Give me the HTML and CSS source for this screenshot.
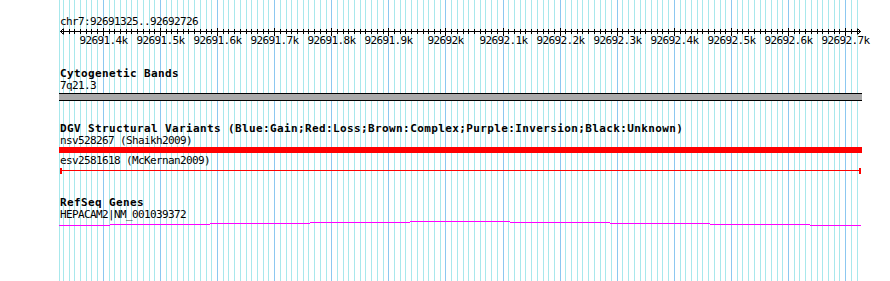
FILE: index.html
```html
<!DOCTYPE html>
<html lang="en">

<head>
    <meta charset="UTF-8" />
    <title>chr7:92691325..92692726</title>
    <link rel="stylesheet" href="styles.css">
</head>

<body>

    <div class="panel" id="panel" data-start="92691325" data-end="92692726">
        <!-- grid behind all tracks -->
        <svg class="grid" id="grid" width="890" height="281"></svg>

        <div class="segment">chr7:92691325..92692726</div>
        <svg class="ruler" id="ruler" width="890" height="20"></svg>

        <div class="track cyto">
            <div class="track-name">Cytogenetic Bands</div>
            <div class="feature-name">7q21.3</div>
            <div class="band"></div>
        </div>

        <div class="track dgv">
            <div class="track-name">DGV Structural Variants (Blue:Gain;Red:Loss;Brown:Complex;Purple:Inversion;Black:Unknown)</div>
            <div class="feature-name">nsv528267 (Shaikh2009)</div>
            <div class="sv-loss"></div>
            <div class="feature-name gap">esv2581618 (McKernan2009)</div>
            <div class="sv-span"></div>
        </div>

        <div class="track refseq">
            <div class="track-name">RefSeq Genes</div>
            <div class="feature-name">HEPACAM2|NM_001039372</div>
            <!-- intron connector, a very flat hat -->
            <svg class="intron" width="890" height="6">
                <rect x="59" y="4" width="51" height="1" />
                <rect x="110" y="3" width="100" height="1" />
                <rect x="210" y="2" width="100" height="1" />
                <rect x="310" y="1" width="100" height="1" />
                <rect x="410" y="0" width="100" height="1" />
                <rect x="510" y="1" width="100" height="1" />
                <rect x="610" y="2" width="100" height="1" />
                <rect x="710" y="3" width="100" height="1" />
                <rect x="810" y="4" width="51" height="1" />
            </svg>
        </div>
    </div>

    <script src="script.js"></script>

</body>

</html>
```

FILE: styles.css
```css
body {
    margin: 0;
    background: #fff;
}

.panel {
    position: relative;
    width: 890px;
    height: 281px;
    padding-top: 16px;
    box-sizing: border-box;
    overflow: hidden;
    font-family: "DejaVu Sans Mono", "Liberation Mono", monospace;
    font-size: 11px;
    color: #000;
}

.grid {
    position: absolute;
    top: 0;
    left: 0;
    z-index: 0;
}

.grid .minor {
    fill: #a8e8ec;
}

.grid .major {
    fill: #8cc8f0;
}

.segment,
.ruler,
.track {
    position: relative;
    z-index: 1;
}

.segment,
.feature-name {
    padding-left: 60px;
    height: 12px;
    line-height: 12px;
    letter-spacing: -0.62px;
    white-space: nowrap;
}

.track-name {
    padding-left: 60px;
    height: 12px;
    line-height: 12px;
    font-weight: bold;
    letter-spacing: 0.38px;
    white-space: nowrap;
}

.ruler {
    display: block;
}

.ruler .axis,
.ruler .tick {
    fill: #000;
}

.ruler .arrow {
    fill: none;
    stroke: #000;
    stroke-width: 1;
}

.ruler text {
    font-family: "DejaVu Sans Mono", "Liberation Mono", monospace;
    font-size: 11px;
    letter-spacing: -0.62px;
    text-anchor: middle;
    fill: #000;
}

.cyto {
    margin-top: 20px;
}

.dgv {
    margin-top: 22px;
}

.refseq {
    margin-top: 23px;
}

.band {
    margin: 1px 0 0 59px;
    width: 803px;
    height: 8px;
    box-sizing: border-box;
    border-top: 1px solid #000;
    border-bottom: 1px solid #000;
    background: #aaa;
}

.sv-loss {
    margin-left: 59px;
    width: 803px;
    height: 6px;
    background: #f00;
}

.gap {
    margin-top: 2px;
}

.sv-span {
    margin: 1px 0 0 60px;
    width: 801px;
    height: 6px;
    box-sizing: border-box;
    border-left: 2px solid #f00;
    border-right: 2px solid #f00;
    background: linear-gradient(to bottom, transparent 2px, #f00 2px, #f00 3px, transparent 3px);
}

.intron {
    display: block;
}

.intron rect {
    fill: #f0f;
}
```

FILE: script.js
```js
const panel = document.getElementById('panel');
const start = Number(panel.dataset.start);
const end = Number(panel.dataset.end);
const left = 60;
const right = 860;
const scale = (right - left) / (end - start);
const NS = 'http://www.w3.org/2000/svg';

function xOf(bp) {
    return Math.round(left + (bp - start) * scale);
}

function add(parent, name, attrs, text) {
    const node = document.createElementNS(NS, name);
    Object.keys(attrs).forEach(key => node.setAttribute(key, attrs[key]));
    if (text) node.textContent = text;
    parent.appendChild(node);
    return node;
}

// grid: one line every 10bp, darker every 100bp
const grid = document.getElementById('grid');
add(grid, 'rect', { x: 59, y: 0, width: 1, height: 281, class: 'minor' });
for (let bp = Math.ceil(start / 10) * 10; bp <= end; bp += 10) {
    const major = bp % 100 === 0;
    add(grid, 'rect', { x: xOf(bp), y: 0, width: 1, height: 281, class: major ? 'major' : 'minor' });
}

// ruler with ticks and labels
const ruler = document.getElementById('ruler');
add(ruler, 'rect', { x: left, y: 3, width: right - left + 1, height: 1, class: 'axis' });
add(ruler, 'path', { d: `M${left + 3.5} 0.5 L${left + 0.5} 3.5 L${left + 3.5} 6.5`, class: 'arrow' });
add(ruler, 'path', { d: `M${right - 2.5} 0.5 L${right + 0.5} 3.5 L${right - 2.5} 6.5`, class: 'arrow' });

for (let bp = Math.ceil(start / 10) * 10; bp <= end; bp += 10) {
    const x = xOf(bp);
    if (bp % 100 === 0) {
        add(ruler, 'rect', { x: x, y: 0, width: 1, height: 8, class: 'tick' });
        add(ruler, 'text', { x: x + 0.5, y: 16 }, String(bp / 1000) + 'k');
    } else {
        add(ruler, 'rect', { x: x, y: 1, width: 1, height: 5, class: 'tick' });
    }
}
```
